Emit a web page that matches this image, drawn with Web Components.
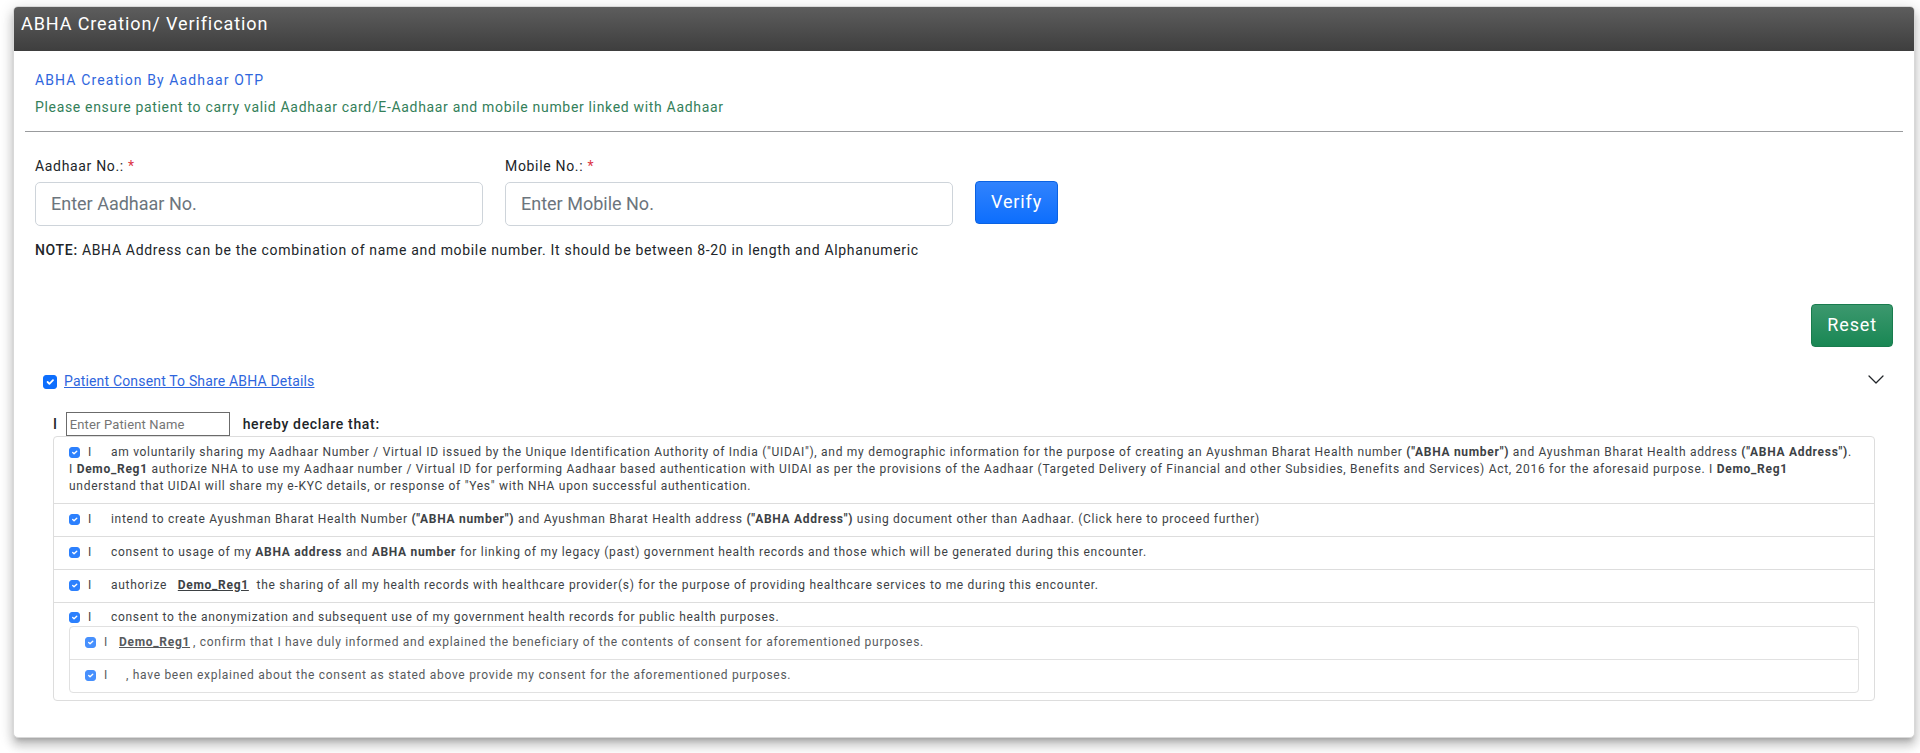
<!DOCTYPE html>
<html lang="en">
<head>
<meta charset="utf-8">
<title>ABHA Creation/ Verification</title>
<style>
  body {
    margin: 0;
    padding: 6px 5px 15px 13px;
    background: #fff;
    color: #212529;
    font: 400 14px/21px Roboto, "Liberation Sans", sans-serif;
    letter-spacing: 0.048em;
  }
</style>
</head>
<body>
<abha-page></abha-page>

<script>
const define = (name, html, setup) =>
  customElements.define(name, class extends HTMLElement {
    constructor() {
      super();
      const template = document.createElement('template');
      template.innerHTML = html;
      this.attachShadow({ mode: 'open' }).append(template.content.cloneNode(true));
    }
    connectedCallback() {
      if (setup) setup(this, this.shadowRoot);
    }
  });

const checkboxStyle = `
  input[type=checkbox] {
    appearance: none;
    box-sizing: border-box;
    width: var(--box, 11px);
    height: var(--box, 11px);
    margin: 0;
    border: 1px solid #0d6efd;
    border-radius: 3px;
    background: #fff;
  }
  input[type=checkbox]:checked {
    background: #0d6efd url("data:image/svg+xml,%3Csvg xmlns='http://www.w3.org/2000/svg' viewBox='0 0 20 20'%3E%3Cpath fill='none' stroke='%23fff' stroke-linecap='round' stroke-linejoin='round' stroke-width='3' d='m6 10 3 3 6-6'/%3E%3C/svg%3E") center / contain no-repeat;
  }`;

define('panel-card', `
  <style>
    :host { display: block; }
    article {
      border: 1px solid #d8d8d8;
      border-radius: 5px;
      background: #fff;
      box-shadow: 0 5px 5px -3px rgba(0,0,0,.2), 0 8px 10px 1px rgba(0,0,0,.14), 0 3px 14px 2px rgba(0,0,0,.12);
    }
    header {
      padding: 3px 7px 14px;
      border-radius: 4px 4px 0 0;
      background: linear-gradient(#5d5d5d, #3e3e3e);
      color: #fff;
    }
    h1 { margin: 0; font-size: 18px; line-height: 27px; font-weight: 400; letter-spacing: 0.05em; }
    .body { padding: 19px 11px 36px; }
  </style>
  <article>
    <header><h1><slot name="title"></slot></h1></header>
    <div class="body"><slot></slot></div>
  </article>`);

define('text-field', `
  <style>
    :host { display: block; }
    label { display: block; margin-bottom: 5px; }
    span { color: #dc3545; }
    input {
      box-sizing: border-box;
      width: 100%;
      height: 44px;
      display: block;
      padding: 0 15px 1px;
      border: 1px solid #ced4da;
      border-radius: 5px;
      background: #fff;
      color: #212529;
      font: 400 18px/27px Roboto, "Liberation Sans", sans-serif;
    }
    input::placeholder { color: #6c757d; opacity: 1; }
  </style>
  <label for="control"><slot></slot> <span>*</span></label>
  <input id="control" type="text" required>`,
  (host, root) => { root.querySelector('input').placeholder = host.getAttribute('placeholder'); });

define('action-button', `
  <style>
    :host { display: block; --fill: #0d6efd; --top: #3183fd; --edge: #0b62e2; }
    :host([variant=success]) { --fill: #198754; --top: #3c986e; --edge: #197c4e; }
    button {
      display: block;
      height: 43px;
      padding: 0 15px 2px;
      border: 1px solid var(--edge);
      border-radius: 4px;
      background: linear-gradient(var(--top), var(--fill));
      color: #fff;
      font: 400 18px/27px Roboto, "Liberation Sans", sans-serif;
      letter-spacing: 0.048em;
    }
  </style>
  <button type="button"><slot></slot></button>`);

define('consent-item', `
  <style>
    ${checkboxStyle}
    :host { display: block; padding: 7px 15px 8px; }
    :host(:not(:first-child)) { border-top: 1px solid #d8d8d8; }
    :host([group]) { padding-top: 6px; padding-bottom: 7px; }
    label { display: block; }
    input { vertical-align: -2px; }
    .who { display: inline-block; margin: 0 19px 0 8px; }
    :host([named]) .who { margin-right: 11px; }
  </style>
  <label><input type="checkbox" checked><span class="who">I</span><slot></slot></label>
  <slot name="nested"></slot>`);

define('consent-list', `
  <style>
    :host {
      display: block;
      border: 1px solid #d8d8d8;
      border-radius: 4px;
      color: #212529;
      font-size: 12px;
      line-height: 17px;
      letter-spacing: 0.059em;
      opacity: 0.87;
    }
  </style>
  <slot></slot>`);

define('consent-section', `
  <style>
    ${checkboxStyle}
    :host { display: block; padding: 0 18px; }
    .head { display: flex; align-items: center; gap: 7px; --box: 14px; }
    .head a { color: #2f66dd; letter-spacing: 0.012em; text-decoration: underline; }
    .head button { display: flex; margin: 0 1px 0 auto; padding: 0; border: 0; background: none; color: #212529; }
    .content { padding: 20px 10px 0; }
    .declare { display: flex; align-items: center; gap: 8px; font-weight: 500; color: #212529; }
    .declare input {
      box-sizing: border-box;
      width: 164px;
      height: 24px;
      margin-right: 5px;
      padding: 0 3px;
      border: 1px solid #6b6b6b;
      border-radius: 0;
      font: 400 13px/20px Roboto, "Liberation Sans", sans-serif;
      letter-spacing: 0.012em;
    }
    .declare input::placeholder { color: #757575; opacity: 1; }
  </style>
  <div class="head">
    <input type="checkbox" checked aria-labelledby="terms">
    <a id="terms" href="#consent">Patient Consent To Share ABHA Details</a>
    <button type="button" aria-label="Toggle consent details">
      <svg width="16" height="16" viewBox="0 0 16 16" fill="none" stroke="currentColor" stroke-width="1.25" stroke-linecap="round" stroke-linejoin="round"><path d="M1 2l7 7 7-7"/></svg>
    </button>
  </div>
  <div class="content" id="consent">
    <div class="declare">
      <label for="patient">I</label>
      <input id="patient" type="text" placeholder="Enter Patient Name">
      <span>hereby declare that:</span>
    </div>
    <slot></slot>
  </div>`);

define('abha-page', `
  <style>
    :host { display: block; }
    h2, p { margin: 0; font-size: 14px; line-height: 21px; font-weight: 400; }
    h2 { margin: 0 10px 6px; color: #2f66dd; letter-spacing: 0.08em; }
    .hint { margin: 0 10px; color: #34805a; }
    hr { margin: 13px 0 24px; border: 0; border-top: 1px solid #999b9d; }
    form { display: grid; grid-template-columns: repeat(4, 1fr); gap: 22px; align-items: start; padding: 0 10px; }
    form action-button { margin-top: 25px; }
    .note { margin: 14px 10px 0; }
    .note b { font-weight: 500; }
    .reset { display: flex; justify-content: flex-end; padding: 43px 10px 24px; }
    .gap { margin: 0 4px 0 7px; }
    .after { margin-left: 3px; }
    .before { margin-left: 7px; }
  </style>
  <panel-card>
    <span slot="title">ABHA Creation/ Verification</span>
    <h2>ABHA Creation By Aadhaar OTP</h2>
    <p class="hint">Please ensure patient to carry valid Aadhaar card/E-Aadhaar and mobile number linked with Aadhaar</p>
    <hr>
    <form>
      <text-field placeholder="Enter Aadhaar No.">Aadhaar No.:</text-field>
      <text-field placeholder="Enter Mobile No.">Mobile No.:</text-field>
      <action-button>Verify</action-button>
    </form>
    <p class="note"><b>NOTE:</b> ABHA Address can be the combination of name and mobile number. It should be between 8-20 in length and Alphanumeric</p>
    <div class="reset"><action-button variant="success">Reset</action-button></div>
    <consent-section>
      <consent-list>
        <consent-item>am voluntarily sharing my Aadhaar Number / Virtual ID issued by the Unique Identification Authority of India ("UIDAI"), and my demographic information for the purpose of creating an Ayushman Bharat Health number <b>("ABHA number")</b> and Ayushman Bharat Health address <b>("ABHA Address")</b>.<br>I <b>Demo_Reg1</b> authorize NHA to use my Aadhaar number / Virtual ID for performing Aadhaar based authentication with UIDAI as per the provisions of the Aadhaar (Targeted Delivery of Financial and other Subsidies, Benefits and Services) Act, 2016 for the aforesaid purpose. I <b>Demo_Reg1</b> understand that UIDAI will share my e-KYC details, or response of "Yes" with NHA upon successful authentication.</consent-item>
        <consent-item>intend to create Ayushman Bharat Health Number <b>("ABHA number")</b> and Ayushman Bharat Health address <b>("ABHA Address")</b> using document other than Aadhaar. (Click here to proceed further)</consent-item>
        <consent-item>consent to usage of my <b>ABHA address</b> and <b>ABHA number</b> for linking of my legacy (past) government health records and those which will be generated during this encounter.</consent-item>
        <consent-item>authorize <b class="gap"><u>Demo_Reg1</u></b> the sharing of all my health records with healthcare provider(s) for the purpose of providing healthcare services to me during this encounter.</consent-item>
        <consent-item group>consent to the anonymization and subsequent use of my government health records for public health purposes.
          <consent-list slot="nested">
            <consent-item named><b><u>Demo_Reg1</u></b><span class="after">, confirm that I have duly informed and explained the beneficiary of the contents of consent for aforementioned purposes.</span></consent-item>
            <consent-item named><span class="before">, have been explained about the consent as stated above provide my consent for the aforementioned purposes.</span></consent-item>
          </consent-list>
        </consent-item>
      </consent-list>
    </consent-section>
  </panel-card>`);
</script>
</body>
</html>
